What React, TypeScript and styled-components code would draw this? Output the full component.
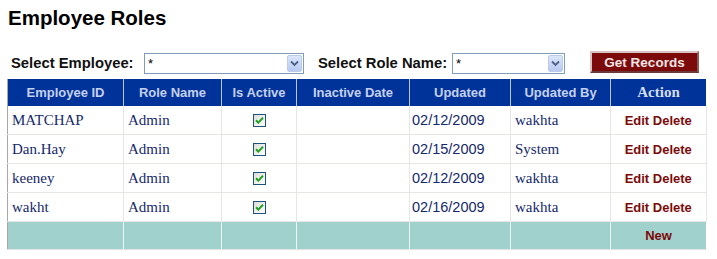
import React from "react";
import styled, { createGlobalStyle } from "styled-components";

const GlobalStyle = createGlobalStyle`
  body {
    margin: 0;
    background: #ffffff;
    font-family: "Liberation Sans", Arial, sans-serif;
  }
`;

const Page = styled.div`
  width: 717px;
  height: 259px;
  padding: 6px 0 0 0;
  box-sizing: border-box;
`;

const Title = styled.h1`
  margin: 0 0 0 8px;
  font-size: 20.5px;
  line-height: 24px;
  font-weight: bold;
  color: #000;
`;

const Filters = styled.div`
  display: flex;
  align-items: center;
  height: 24px;
  margin-top: 21px;
  padding-left: 11px;
`;

const Label = styled.span<{ w: number }>`
  width: ${(p) => p.w}px;
  flex: none;
  font-size: 14.8px;
  font-weight: bold;
  color: #111;
  white-space: nowrap;
`;

const Select = styled.div<{ w: number; after: number }>`
  position: relative;
  flex: none;
  width: ${(p) => p.w}px;
  height: 21px;
  box-sizing: border-box;
  border: 1px solid #7f9db9;
  background: #fff;
  margin-right: ${(p) => p.after}px;
  display: flex;
  align-items: center;
  padding-left: 3px;
  font-size: 13px;
  color: #000;
`;

const Arrow = styled.div`
  position: absolute;
  right: 1px;
  top: 1px;
  width: 15px;
  height: 17px;
  box-sizing: border-box;
  border: 1px solid #bccbe9;
  border-radius: 2px;
  background: linear-gradient(#dce6fb, #b7c9f3);
  display: flex;
  align-items: center;
  justify-content: center;
`;

const Button = styled.button`
  flex: none;
  width: 109px;
  height: 22px;
  box-sizing: border-box;
  background: #7d0a0a;
  border: 2px solid;
  border-color: #d9c3c3 #8a5a5a #6a3a3a #d9c3c3;
  color: #f3e6e6;
  font-family: "Liberation Sans", Arial, sans-serif;
  font-weight: bold;
  font-size: 13.5px;
  padding: 0;
  margin-top: -2px;
  cursor: pointer;
`;

const Table = styled.table`
  margin: 4px 0 0 7px;
  border-collapse: collapse;
  table-layout: fixed;
  border-left: 1px solid #a8a8a8;
`;

const Th = styled.th<{ w: number; serif?: boolean }>`
  width: ${(p) => p.w}px;
  height: 27px;
  padding: 0;
  background: #003399;
  color: ${(p) => (p.serif ? "#d6def6" : "#c5d0f0")};
  font-family: ${(p) =>
    p.serif
      ? `"Liberation Serif", "Times New Roman", serif`
      : `"Liberation Sans", Arial, sans-serif`};
  font-size: ${(p) => (p.serif ? "15px" : "13px")};
  font-weight: bold;
  text-align: center;
  border-left: 1px solid #b8c6ea;
  &:first-child {
    border-left: none;
  }
`;

const Td = styled.td<{ kind?: "text" | "date" | "center" | "action" }>`
  height: 28px;
  padding: 0 ${(p) => (p.kind === "date" ? "2px" : "4px")};
  border: 1px solid #e6e6e2;
  border-top: none;
  color: #16296b;
  font-family: ${(p) =>
    p.kind === "date" || p.kind === "action"
      ? `"Liberation Sans", Arial, sans-serif`
      : `"Liberation Serif", "Times New Roman", serif`};
  font-size: ${(p) =>
    p.kind === "date" ? "14.5px" : p.kind === "action" ? "13px" : "15px"};
  font-weight: ${(p) => (p.kind === "action" ? "bold" : "normal")};
  text-align: ${(p) =>
    p.kind === "center" || p.kind === "action" ? "center" : "left"};
  white-space: nowrap;
  overflow: hidden;
  &:first-child {
    border-left: none;
  }
`;

const FootTd = styled.td`
  height: 27px;
  padding: 0;
  background: #a0d1cd;
  border-left: 1px solid #eef6f5;
  border-bottom: 1px solid #e2e2e2;
  color: #7d0a0a;
  font-size: 13px;
  font-weight: bold;
  text-align: center;
  &:first-child {
    border-left: none;
  }
`;

const Link = styled.span`
  color: #7d0a0a;
`;

const Check = () => (
  <svg width="13" height="13" viewBox="0 0 13 13" style={{ display: "block", margin: "0 auto" }}>
    <defs>
      <linearGradient id="cb" x1="0" y1="0" x2="1" y2="1">
        <stop offset="0" stopColor="#dcdcd6" />
        <stop offset="1" stopColor="#ffffff" />
      </linearGradient>
    </defs>
    <rect x="0.5" y="0.5" width="12" height="12" fill="url(#cb)" stroke="#1c5180" />
    <path d="M3 6.2 L5.3 8.6 L10 3.8" fill="none" stroke="#21a121" strokeWidth="2" />
  </svg>
);

const Chevron = () => (
  <svg width="9" height="7" viewBox="0 0 9 7">
    <path d="M1 1.5 L4.5 5 L8 1.5" fill="none" stroke="#4d6185" strokeWidth="1.8" />
  </svg>
);

type Row = { id: string; date: string; by: string };

const rows: Row[] = [
  { id: "MATCHAP", date: "02/12/2009", by: "wakhta" },
  { id: "Dan.Hay", date: "02/15/2009", by: "System" },
  { id: "keeney", date: "02/12/2009", by: "wakhta" },
  { id: "wakht", date: "02/16/2009", by: "wakhta" },
];

const cols = [115, 97, 74, 112, 100, 99, 95];

export default function App() {
  return (
    <Page>
      <GlobalStyle />
      <Title>Employee Roles</Title>
      <Filters>
        <Label w={133}>Select Employee:</Label>
        <Select w={160} after={14}>
          *
          <Arrow>
            <Chevron />
          </Arrow>
        </Select>
        <Label w={134}>Select Role Name:</Label>
        <Select w={113} after={25}>
          *
          <Arrow>
            <Chevron />
          </Arrow>
        </Select>
        <Button>Get Records</Button>
      </Filters>
      <Table>
        <thead>
          <tr>
            <Th w={cols[0]}>Employee ID</Th>
            <Th w={cols[1]}>Role Name</Th>
            <Th w={cols[2]}>Is Active</Th>
            <Th w={cols[3]}>Inactive Date</Th>
            <Th w={cols[4]}>Updated</Th>
            <Th w={cols[5]}>Updated By</Th>
            <Th w={cols[6]} serif>
              Action
            </Th>
          </tr>
        </thead>
        <tbody>
          {rows.map((r) => (
            <tr key={r.id}>
              <Td>{r.id}</Td>
              <Td>Admin</Td>
              <Td kind="center">
                <Check />
              </Td>
              <Td />
              <Td kind="date">{r.date}</Td>
              <Td>{r.by}</Td>
              <Td kind="action">
                <Link>Edit</Link> <Link>Delete</Link>
              </Td>
            </tr>
          ))}
          <tr>
            <FootTd />
            <FootTd />
            <FootTd />
            <FootTd />
            <FootTd />
            <FootTd />
            <FootTd>New</FootTd>
          </tr>
        </tbody>
      </Table>
    </Page>
  );
}
